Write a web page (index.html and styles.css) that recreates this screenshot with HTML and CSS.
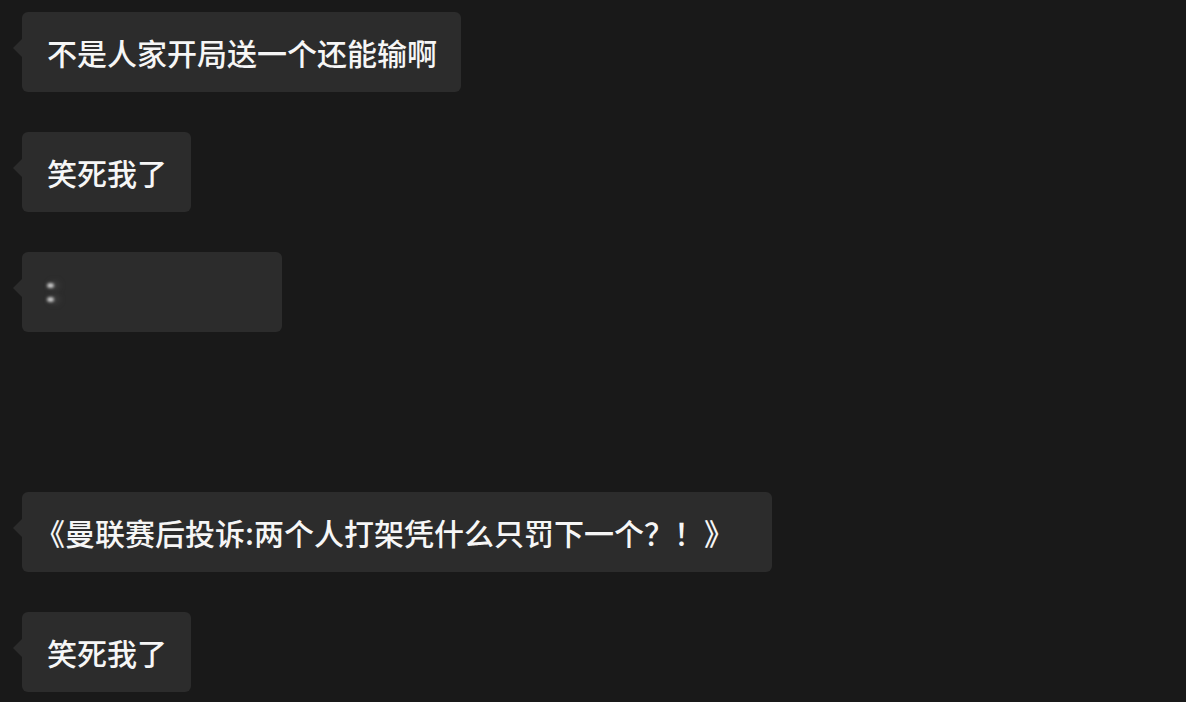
FILE: index.html
```html
<!DOCTYPE html>
<html lang="zh-CN">
<head>
  <meta charset="UTF-8" />
  <meta name="viewport" content="width=device-width, initial-scale=1" />
  <title>聊天记录</title>
  <link rel="stylesheet" href="styles.css">
</head>
<body>
  <div class="chat">
    <div class="msg"><div class="bubble">不是人家开局送一个还能输啊</div></div>
    <div class="msg"><div class="bubble">笑死我了</div></div>
    <div class="msg">
      <div class="bubble bubble-blur">
        <span class="blur-dots"><i></i><i></i></span>
      </div>
    </div>
    <div class="msg msg-empty"></div>
    <div class="msg"><div class="bubble bubble-quote">《曼联赛后投诉:两个人打架凭什么只罚下一个？！》</div></div>
    <div class="msg"><div class="bubble">笑死我了</div></div>
  </div>
</body>
</html>
```

FILE: styles.css
```css
body {
  margin: 0;
  background: #191919;
  font-family: "Noto Sans CJK SC", "Noto Sans", sans-serif;
  color: #f6f6f6;
}

.chat {
  display: flex;
  flex-direction: column;
  gap: 40px;
  padding: 12px 0 0 22px;
}

.msg {
  display: flex;
  height: 80px;
}

.bubble {
  position: relative;
  box-sizing: border-box;
  height: 80px;
  padding: 0 24px 0 25px;
  background: #2c2c2c;
  border-radius: 6px;
  font-size: 30px;
  font-weight: 500;
  line-height: 80px;
  white-space: nowrap;
}

.bubble::before {
  content: "";
  position: absolute;
  left: -9px;
  top: 27px;
  border-top: 9px solid transparent;
  border-bottom: 9px solid transparent;
  border-right: 9px solid #2c2c2c;
}

/* 书名号在这个字体里左边留白，往左收一点 */
.bubble-quote {
  padding: 0 38px 0 13px;
}

.bubble-blur {
  width: 260px;
  display: flex;
  align-items: center;
}

.blur-dots {
  display: flex;
  flex-direction: column;
  gap: 9px;
  filter: blur(1.5px);
}

.blur-dots i {
  display: block;
  width: 7px;
  height: 5px;
  border-radius: 50%;
  background: #cfcfcf;
  box-shadow: 4px 0 6px #555;
}
```
